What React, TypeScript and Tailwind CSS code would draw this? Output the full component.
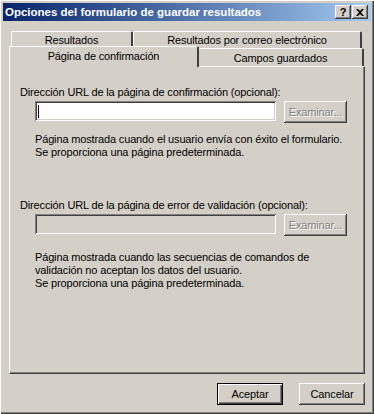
import React from 'react';

const raised =
  'shadow-[inset_-1px_-1px_#404040,inset_1px_1px_#ffffff,inset_-2px_-2px_#808080]';
const sunken =
  'shadow-[inset_1px_1px_#808080,inset_-1px_-1px_#ffffff,inset_2px_2px_#404040,inset_-2px_-2px_#d4d0c8]';

function TitleButton({ children }: { children: React.ReactNode }) {
  return (
    <div
      className={`w-[16px] h-[14px] bg-[#d4d0c8] ${raised} flex items-center justify-center text-[11px] font-bold leading-none text-black`}
    >
      {children}
    </div>
  );
}

function BrowseButton() {
  return (
    <div
      className={`w-[63px] h-[22px] bg-[#d4d0c8] ${raised} flex items-center justify-center text-[#808080] [text-shadow:1px_1px_0_#ffffff]`}
    >
      Examinar...
    </div>
  );
}

function DialogButton({ label, isDefault }: { label: string; isDefault?: boolean }) {
  return (
    <div
      className={`w-[66px] h-[22px] bg-[#d4d0c8] flex items-center justify-center text-black ${
        isDefault
          ? 'shadow-[inset_1px_1px_#000000,inset_-1px_-1px_#000000,inset_2px_2px_#ffffff,inset_-2px_-2px_#404040,inset_-3px_-3px_#808080]'
          : raised
      }`}
    >
      {label}
    </div>
  );
}

export default function App() {
  return (
    <div
      className="w-[374px] h-[414px] bg-[#d4d0c8] p-[3px] flex flex-col text-[11px] leading-[13px] tracking-[-0.15px] text-black shadow-[inset_1px_1px_#ffffff,inset_-1px_-1px_#404040,inset_-2px_-2px_#808080]"
      style={{ fontFamily: '"Liberation Sans", Arial, sans-serif' }}
    >
      {/* Title bar */}
      <div className="h-[18px] flex items-center justify-between pl-[2px] pr-[3px] bg-gradient-to-r from-[#0a246a] to-[#a6caf0]">
        <span className="text-white font-bold text-[11.5px] tracking-normal">
          Opciones del formulario de guardar resultados
        </span>
        <div className="flex gap-[1px]">
          <TitleButton>?</TitleButton>
          <TitleButton>
            <svg width="8" height="7" viewBox="0 0 8 7">
              <path d="M0 0h2l2 2 2-2h2L5 3.5 8 7H6L4 5 2 7H0l3-3.5z" fill="#000" />
            </svg>
          </TitleButton>
        </div>
      </div>

      {/* Tabs */}
      <div className="mt-[10px] ml-[8px] flex h-[17px]">
        <div className="w-[122px] h-[17px] bg-[#d4d0c8] border-t border-l border-white border-r-2 border-r-[#404040] rounded-t-[2px] flex items-center justify-center">
          Resultados
        </div>
        <div className="w-[229px] h-[17px] bg-[#d4d0c8] border-t border-l border-white border-r-2 border-r-[#404040] rounded-t-[2px] flex items-center justify-center">
          Resultados por correo electrónico
        </div>
      </div>
      <div className="ml-[6px] flex items-end h-[19px] -mt-[1px] relative z-10">
        <div className="w-[190px] h-[21px] bg-[#d4d0c8] border-t border-l border-white border-r-2 border-r-[#404040] rounded-t-[2px] flex items-start justify-center pt-[3px] -mb-[1px]">
          Página de confirmación
        </div>
        <div className="w-[165px] h-[18px] bg-[#d4d0c8] border-t border-white border-r-2 border-r-[#404040] rounded-t-[2px] flex items-center justify-center pt-[2px]">
          Campos guardados
        </div>
      </div>

      {/* Panel */}
      <div className="ml-[6px] w-[356px] h-[308px] border-l border-t border-white border-r border-r-[#404040] border-b border-b-[#404040] shadow-[inset_-1px_-1px_#808080] pl-[10px] pt-[19px]">
        <div>Dirección URL de la página de confirmación (opcional):</div>
        <div className="mt-[2px] ml-[15px] flex items-start gap-[8px]">
          <div className={`w-[241px] h-[20px] bg-white ${sunken} flex items-center pl-[3px]`}>
            <div className="w-[1px] h-[13px] bg-black" />
          </div>
          <BrowseButton />
        </div>
        <div className="mt-[10px] ml-[15px]">
          <div>Página mostrada cuando el usuario envía con éxito el formulario.</div>
          <div>Se proporciona una página predeterminada.</div>
        </div>

        <div className="mt-[40px]">Dirección URL de la página de error de validación (opcional):</div>
        <div className="mt-[2px] ml-[15px] flex items-start gap-[8px]">
          <div className={`w-[241px] h-[20px] bg-[#d4d0c8] ${sunken}`} />
          <BrowseButton />
        </div>
        <div className="mt-[15px] ml-[15px]">
          <div>Página mostrada cuando las secuencias de comandos de</div>
          <div>validación no aceptan los datos del usuario.</div>
          <div>Se proporciona una página predeterminada.</div>
        </div>
      </div>

      {/* Buttons */}
      <div className="mt-[9px] flex justify-end gap-[16px] pr-[6px]">
        <DialogButton label="Aceptar" isDefault />
        <DialogButton label="Cancelar" />
      </div>
    </div>
  );
}
